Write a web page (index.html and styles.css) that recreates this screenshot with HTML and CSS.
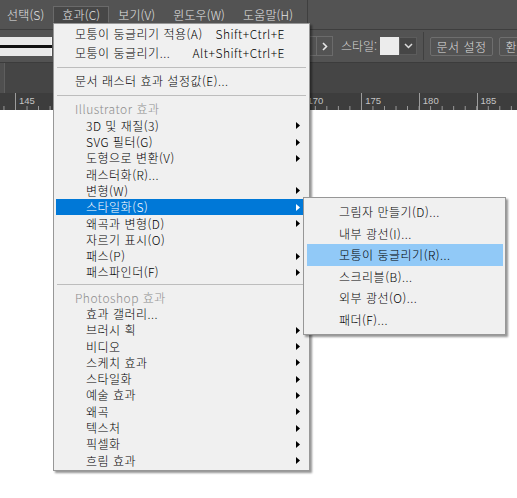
FILE: index.html
```html
<!DOCTYPE html>
<html lang="ko">
<head>
<meta charset="utf-8">
<title>효과 메뉴</title>
<link rel="stylesheet" href="styles.css">
</head>
<body>
<div class="app">
  <div class="topbar">
    <nav class="menubar">
      <span class="mb-item first">선택(S)</span>
      <span class="mb-item active">효과(C)</span>
      <span class="mb-item">보기(V)</span>
      <span class="mb-item">윈도우(W)</span>
      <span class="mb-item">도움말(H)</span>
      <span class="mb-sep"></span>
    </nav>
  </div>
  <div class="controlbar">
    <div class="stroke-preview"><div class="stroke-line"></div></div>
    <div class="ctl-group">
      <div class="ctl-box"></div>
      <div class="ctl-arrow"><svg width="6" height="9" viewBox="0 0 6 9"><polyline points="1,1 4.5,4.5 1,8" fill="none" stroke="#e6e6e6" stroke-width="1.6"/></svg></div>
      <span class="ctl-label">스타일:</span>
      <div class="swatch"></div>
      <div class="ctl-drop"><svg width="9" height="6" viewBox="0 0 9 6"><polyline points="1,1 4.5,4.5 8,1" fill="none" stroke="#dcdcdc" stroke-width="1.5"/></svg></div>
      <div class="ctl-vsep"></div>
      <div class="btn">문서 설정</div>
      <div class="btn">환경 설정</div>
    </div>
  </div>
  <div class="tabstrip"><div class="tab-left"></div><div class="tab-edge"></div></div>
  <div class="ruler">
    <span class="tick">145</span>
    <span class="tick">150</span>
    <span class="tick">155</span>
    <span class="tick">160</span>
    <span class="tick">165</span>
    <span class="tick">170</span>
    <span class="tick">175</span>
    <span class="tick">180</span>
    <span class="tick">185</span>
  </div>
  <div class="canvas"></div>
</div>

<div class="menu main-menu">
  <div class="mi lg top"><span class="label">모퉁이 둥글리기 적용(A)</span><span class="shortcut">Shift+Ctrl+E</span></div>
  <div class="mi lg top"><span class="label">모퉁이 둥글리기...</span><span class="shortcut">Alt+Shift+Ctrl+E</span></div>
  <div class="sep sep1"></div>
  <div class="mi top"><span class="label">문서 래스터 효과 설정값(E)...</span></div>
  <div class="sep sep2"></div>
  <div class="mi header"><span class="label">Illustrator 효과</span></div>
  <div class="mi"><span class="label">3D 및 재질(3)</span><span class="arrow"><svg width="4" height="7" viewBox="0 0 4 7"><polygon points="0,0 4,3.5 0,7"/></svg></span></div>
  <div class="mi"><span class="label">SVG 필터(G)</span><span class="arrow"><svg width="4" height="7" viewBox="0 0 4 7"><polygon points="0,0 4,3.5 0,7"/></svg></span></div>
  <div class="mi"><span class="label">도형으로 변환(V)</span><span class="arrow"><svg width="4" height="7" viewBox="0 0 4 7"><polygon points="0,0 4,3.5 0,7"/></svg></span></div>
  <div class="mi"><span class="label">래스터화(R)...</span></div>
  <div class="mi"><span class="label">변형(W)</span><span class="arrow"><svg width="4" height="7" viewBox="0 0 4 7"><polygon points="0,0 4,3.5 0,7"/></svg></span></div>
  <div class="mi selected"><span class="label">스타일화(S)</span><span class="arrow"><svg width="4" height="7" viewBox="0 0 4 7"><polygon points="0,0 4,3.5 0,7"/></svg></span></div>
  <div class="mi"><span class="label">왜곡과 변형(D)</span><span class="arrow"><svg width="4" height="7" viewBox="0 0 4 7"><polygon points="0,0 4,3.5 0,7"/></svg></span></div>
  <div class="mi"><span class="label">자르기 표시(O)</span></div>
  <div class="mi"><span class="label">패스(P)</span><span class="arrow"><svg width="4" height="7" viewBox="0 0 4 7"><polygon points="0,0 4,3.5 0,7"/></svg></span></div>
  <div class="mi"><span class="label">패스파인더(F)</span><span class="arrow"><svg width="4" height="7" viewBox="0 0 4 7"><polygon points="0,0 4,3.5 0,7"/></svg></span></div>
  <div class="sep sep3"></div>
  <div class="mi header"><span class="label">Photoshop 효과</span></div>
  <div class="mi"><span class="label">효과 갤러리...</span></div>
  <div class="mi"><span class="label">브러시 획</span><span class="arrow"><svg width="4" height="7" viewBox="0 0 4 7"><polygon points="0,0 4,3.5 0,7"/></svg></span></div>
  <div class="mi"><span class="label">비디오</span><span class="arrow"><svg width="4" height="7" viewBox="0 0 4 7"><polygon points="0,0 4,3.5 0,7"/></svg></span></div>
  <div class="mi"><span class="label">스케치 효과</span><span class="arrow"><svg width="4" height="7" viewBox="0 0 4 7"><polygon points="0,0 4,3.5 0,7"/></svg></span></div>
  <div class="mi"><span class="label">스타일화</span><span class="arrow"><svg width="4" height="7" viewBox="0 0 4 7"><polygon points="0,0 4,3.5 0,7"/></svg></span></div>
  <div class="mi"><span class="label">예술 효과</span><span class="arrow"><svg width="4" height="7" viewBox="0 0 4 7"><polygon points="0,0 4,3.5 0,7"/></svg></span></div>
  <div class="mi"><span class="label">왜곡</span><span class="arrow"><svg width="4" height="7" viewBox="0 0 4 7"><polygon points="0,0 4,3.5 0,7"/></svg></span></div>
  <div class="mi"><span class="label">텍스처</span><span class="arrow"><svg width="4" height="7" viewBox="0 0 4 7"><polygon points="0,0 4,3.5 0,7"/></svg></span></div>
  <div class="mi"><span class="label">픽셀화</span><span class="arrow"><svg width="4" height="7" viewBox="0 0 4 7"><polygon points="0,0 4,3.5 0,7"/></svg></span></div>
  <div class="mi"><span class="label">흐림 효과</span><span class="arrow"><svg width="4" height="7" viewBox="0 0 4 7"><polygon points="0,0 4,3.5 0,7"/></svg></span></div>
</div>

<div class="menu sub-menu">
  <div class="si">그림자 만들기(D)...</div>
  <div class="si">내부 광선(I)...</div>
  <div class="si hot">모퉁이 둥글리기(R)...</div>
  <div class="si">스크리블(B)...</div>
  <div class="si">외부 광선(O)...</div>
  <div class="si">패더(F)...</div>
</div>
</body>
</html>
```

FILE: styles.css
```css
html, body {
  margin: 0;
  padding: 0;
}
body {
  width: 517px;
  height: 498px;
  overflow: hidden;
  position: relative;
  background: #ffffff;
  font-family: "Noto Sans CJK KR", "Noto Sans", sans-serif;
  font-size: 12px;
  font-weight: 300;
  letter-spacing: 0.5px;
}
.app {
  display: flex;
  flex-direction: column;
  height: 498px;
}

/* ---------- top menu bar ---------- */
.topbar {
  height: 30px;
  flex: none;
  background: #535353;
  border-bottom: 1px solid #3e3e3e;
  box-sizing: border-box;
}
.menubar {
  display: flex;
  align-items: flex-start;
  height: 23px;
}
.mb-item {
  flex: none;
  margin-top: 6px;
  height: 17px;
  line-height: 16px;
  padding: 0 8px;
  color: #e4e4e4;
  white-space: nowrap;
  box-sizing: border-box;
  border: 1px solid transparent;
  letter-spacing: 0.15px;
}
.mb-item.first {
  padding-left: 6px;
}
.mb-item.active {
  background: #474747;
  border-color: #6a6a6a;
  border-bottom-color: transparent;
}
.mb-sep {
  flex: none;
  width: 1px;
  height: 23px;
  margin-left: 5px;
  background: #3f3f3f;
}

/* ---------- control bar ---------- */
.controlbar {
  height: 33px;
  flex: none;
  background: #535353;
  border-bottom: 1px solid #3c3c3c;
  box-sizing: border-box;
  display: flex;
  align-items: flex-start;
}
.stroke-preview {
  flex: none;
  width: 52px;
  height: 19px;
  margin-top: 7px;
  background: #e9e9e9;
  box-shadow: inset -1px 0 0 #f6f6f6;
  display: flex;
  align-items: center;
}
.stroke-line {
  width: 100%;
  height: 3px;
  background: #111;
}
.ctl-group {
  flex: none;
  margin-left: 248px;
  margin-top: 6px;
  display: flex;
  align-items: center;
  height: 20px;
  white-space: nowrap;
}
.ctl-box {
  flex: none;
  width: 17px;
  height: 20px;
  box-sizing: border-box;
  border: 1px solid #6b6b6b;
}
.ctl-arrow {
  flex: none;
  width: 16px;
  height: 20px;
  box-sizing: border-box;
  border: 1px solid #6b6b6b;
  border-left: none;
  display: flex;
  align-items: center;
  justify-content: center;
}
.ctl-label {
  flex: none;
  margin-left: 8px;
  width: 37px;
  color: #d6d6d6;
  line-height: 20px;
  letter-spacing: 0;
}
.swatch {
  flex: none;
  margin-left: 2px;
  width: 19px;
  height: 18px;
  background: #ececec;
}
.ctl-drop {
  flex: none;
  width: 18px;
  height: 18px;
  box-sizing: border-box;
  background: #464646;
  border: 1px solid #5c5c5c;
  display: flex;
  align-items: center;
  justify-content: center;
}
.ctl-vsep {
  flex: none;
  margin-left: 6px;
  width: 1px;
  height: 28px;
  background: #404040;
}
.btn {
  margin-left: 6px;
  width: 63px;
  height: 19px;
  flex: none;
  box-sizing: border-box;
  border: 1px solid #6e6e6e;
  border-radius: 2px;
  color: #dedede;
  text-align: center;
  line-height: 17px;
}

/* ---------- document tab strip ---------- */
.tabstrip {
  height: 30px;
  flex: none;
  background: #454545;
  display: flex;
}
.tab-left {
  width: 4px;
  background: #4f4f4f;
}
.tab-edge {
  width: 1px;
  background: #5e5e5e;
}

/* ---------- ruler ---------- */
.ruler {
  height: 17px;
  flex: none;
  box-sizing: border-box;
  background-color: #3d3d3d;
  background-image: linear-gradient(90deg, #9c9c9c 0 1px, transparent 1px);
  background-size: 11.54px 4px;
  background-repeat: repeat-x;
  background-position: 15px bottom;
  padding-left: 15px;
  display: flex;
  white-space: nowrap;
}
.tick {
  flex: none;
  width: 57.7px;
  box-sizing: border-box;
  border-left: 1px solid #9c9c9c;
  padding-left: 3px;
  color: #c4c4c4;
  font-family: "Liberation Sans", sans-serif;
  font-weight: 400;
  font-size: 9.5px;
  letter-spacing: 0;
  line-height: 15px;
}
.canvas {
  flex: 1;
  background: #ffffff;
}

/* ---------- menus ---------- */
.menu {
  position: absolute;
  background: #f0f0f0;
  border: 1px solid #979797;
  box-shadow: 2px 2px 2px rgba(0, 0, 0, 0.42);
  color: #000;
}
.main-menu {
  left: 53px;
  top: 23px;
  width: 255px;
  padding-bottom: 1.5px;
  z-index: 2;
}
.mi {
  margin: 0 2px;
  height: 16.3px;
  padding-left: 30px;
  padding-right: 7px;
  display: flex;
  align-items: center;
  white-space: nowrap;
  line-height: 16px;
}
.mi.lg {
  height: 19px;
}
.mi.top,
.mi.header {
  padding-left: 19px;
}
.mi.header {
  color: #8d8d8d;
  line-height: 14px;
}
.mi .label {
  flex: 1;
}
.shortcut {
  margin-right: 15px;
}
.arrow {
  display: flex;
  align-items: center;
}
.arrow svg {
  fill: #000;
}
.mi.selected {
  background: #0078d7;
  color: #ffffff;
}
.mi.selected .arrow svg {
  fill: #ffffff;
}
.sep {
  height: 1px;
  margin: 5px 3px;
  background: #bdbdbd;
}
.sep.sep2 {
  margin: 6px 3px 5px;
}
.sep.sep3 {
  margin: 3px 3px 5px;
}

.sub-menu {
  left: 303px;
  top: 197px;
  width: 201px;
  padding: 3px 0 3.4px;
  z-index: 3;
}
.si {
  margin: 0 2px 0 3px;
  height: 21.6px;
  line-height: 21.6px;
  padding-left: 32px;
  white-space: nowrap;
}
.si.hot {
  background: #91c9f7;
}
```
